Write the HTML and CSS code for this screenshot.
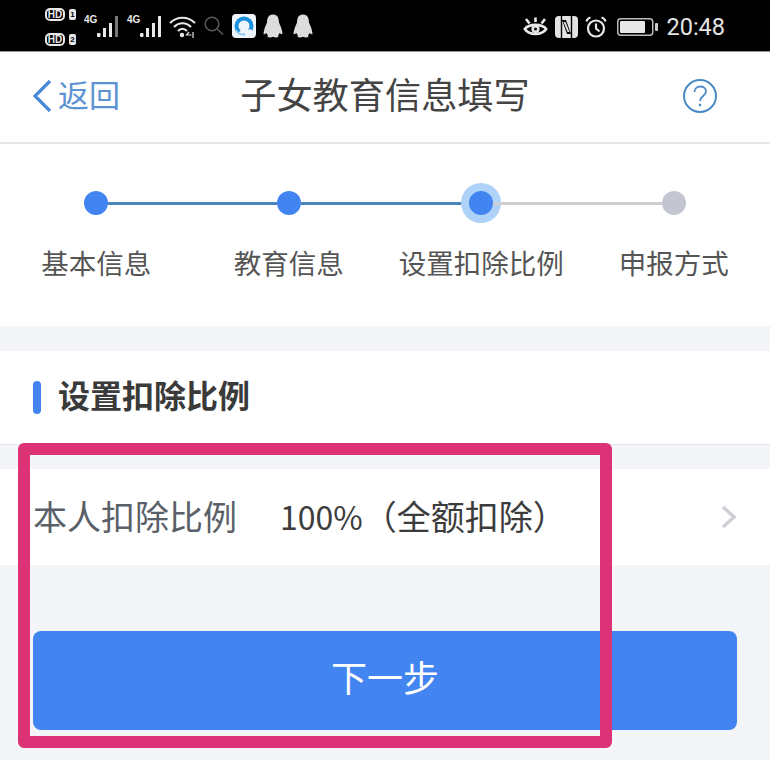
FILE: index.html
```html
<!DOCTYPE html>
<html lang="zh-CN">
  <head>
    <meta charset="UTF-8" />
    <meta name="viewport" content="width=device-width, initial-scale=1.0" />
    <title>子女教育信息填写</title>
    <link rel="stylesheet" href="styles.css">
  </head>
  <body>
    <div class="status-bar">
      <div class="status-left">
        <div class="hd-group">
          <div class="hd-line"><span class="hd">HD</span><span class="sim">1</span></div>
          <div class="hd-line"><span class="hd">HD</span><span class="sim">2</span></div>
        </div>
        <div class="net net-first">
          <span class="net-label">4G</span>
          <svg width="22" height="22" viewBox="0 0 22 22">
            <rect x="0" y="17" width="3.500" height="4" rx="1" fill="#e8e8e8" />
            <rect x="6" y="12" width="3" height="9" fill="#e8e8e8" />
            <rect x="12" y="7" width="3" height="14" fill="#e8e8e8" />
            <rect x="18" y="0" width="3" height="21" fill="#777" />
          </svg>
        </div>
        <div class="net net-second">
          <span class="net-label">4G</span>
          <svg width="22" height="22" viewBox="0 0 22 22">
            <rect x="0" y="17" width="3.500" height="4" rx="1" fill="#e8e8e8" />
            <rect x="6" y="12" width="3" height="9" fill="#e8e8e8" />
            <rect x="12" y="7" width="3" height="14" fill="#e8e8e8" />
            <rect x="18" y="0" width="3" height="21" fill="#e8e8e8" />
          </svg>
        </div>
        <svg class="wifi" width="27" height="22" viewBox="0 0 27 22" fill="none" stroke="#e8e8e8" stroke-width="2.2">
          <path d="M1 7 C8 0 19 0 26 7" />
          <path d="M5 11 C10 6 17 6 22 11" />
          <path d="M9 15 C12 12 15 12 18 15" />
          <circle cx="13" cy="19" r="2.2" fill="#e8e8e8" stroke="none" />
          <path d="M20 16 l-2.5 3 h5 M24 16 v6" stroke-width="1.2" />
        </svg>
        <svg class="search" width="20" height="19" viewBox="0 0 20 19" fill="none" stroke="#5a5a5a" stroke-width="1.5">
          <circle cx="8" cy="8" r="6.8" />
          <path d="M13 13 L19 18.5" />
        </svg>
        <svg class="app-icon" width="24" height="24" viewBox="0 0 24 24">
          <rect width="24" height="24" rx="4" fill="#eef5fa" />
          <circle cx="12" cy="12" r="7.500" fill="none" stroke="#1b8fdc" stroke-width="4" />
          <path d="M6 20 C9 14 14 13 16 16 C19 14 22 17 21 21 L8 22 Z" fill="#eef5fa" />
          <path d="M4 16 C6 20 10 21 13 20" fill="none" stroke="#8cc8ee" stroke-width="2" />
        </svg>
        <svg class="qq qq-first" width="20" height="24" viewBox="0 0 20 24">
          <path d="M10 0.500 C5 0.500 4.200 4.500 4 8.500 C3 11 0.800 15 0.500 20 C1.500 20.500 2.500 19.800 3.500 19 C4 20.500 4.500 21 5 21.500 C4 22.500 4.500 23.500 7 23.500 C8 23.500 9 23.300 10 22.800 C11 23.300 12 23.500 13 23.500 C15.500 23.500 16 22.500 15 21.500 C15.500 21 16 20.500 16.500 19 C17.500 19.800 18.500 20.500 19.500 20 C19.200 15 17 11 16 8.500 C15.800 4.500 15 0.500 10 0.500 Z" fill="#dcdcdc" />
        </svg>
        <svg class="qq qq-next" width="20" height="24" viewBox="0 0 20 24">
          <path d="M10 0.500 C5 0.500 4.200 4.500 4 8.500 C3 11 0.800 15 0.500 20 C1.500 20.500 2.500 19.800 3.500 19 C4 20.500 4.500 21 5 21.500 C4 22.500 4.500 23.500 7 23.500 C8 23.500 9 23.300 10 22.800 C11 23.300 12 23.500 13 23.500 C15.500 23.500 16 22.500 15 21.500 C15.500 21 16 20.500 16.500 19 C17.500 19.800 18.500 20.500 19.500 20 C19.200 15 17 11 16 8.500 C15.800 4.500 15 0.500 10 0.500 Z" fill="#dcdcdc" />
        </svg>
      </div>
      <div class="status-right">
        <svg width="25" height="20" viewBox="0 0 25 20" fill="none" stroke="#e8e8e8" stroke-width="2.600">
          <path d="M1.800 12 C6 6.500 19 6.500 23.200 12 C19 18.500 6 18.500 1.800 12 Z" />
          <circle cx="12.500" cy="12" r="2.800" />
          <path d="M3 2 L6.500 6.500 M22 2 L18.500 6.500 M12.500 0.500 V5" />
        </svg>
        <svg class="nfc" width="23" height="22" viewBox="0 0 23 22">
          <rect width="23" height="22" rx="4" fill="#e4e4e4" />
          <path d="M6.500 -1 V23 M16.500 -1 V23" stroke="#000" stroke-width="1.400" />
          <path d="M7 4 L11 4 L16 18 L12 18 Z" fill="#000" />
          <path d="M8.500 6 L10.500 6 L14.500 16 L12.500 16 Z" fill="#e4e4e4" />
        </svg>
        <svg class="alarm" width="22" height="22" viewBox="0 0 22 22" fill="none" stroke="#e8e8e8" stroke-width="2.200">
          <circle cx="11" cy="12.500" r="8" />
          <path d="M11 7.500 V12.500 L14.500 15.500 M1.500 5.500 C2 3.500 3.500 2 5.500 1.500 M20.500 5.500 C20 3.500 18.500 2 16.500 1.500" />
        </svg>
        <svg class="battery" width="42" height="18" viewBox="0 0 42 18">
          <rect x="0.750" y="0.750" width="35" height="16.500" rx="3" fill="none" stroke="#bbb" stroke-width="1.500" />
          <rect x="3" y="3" width="25" height="12" rx="1" fill="#e8e8e8" />
          <rect x="38" y="5" width="3" height="8" rx="1" fill="#ccc" />
        </svg>
        <span class="clock">20:48</span>
      </div>
    </div>

    <div class="nav">
      <div class="nav-back">
        <svg width="20" height="34" viewBox="0 0 20 34" fill="none" stroke="#4a8ad6" stroke-width="3.200">
          <path d="M18 2 L3 17 L18 32" />
        </svg>
        <span class="nav-back-text">返回</span>
      </div>
      <h1 class="nav-title">子女教育信息填写</h1>
      <svg class="nav-help" width="36" height="36" viewBox="0 0 36 36" fill="none" stroke="#4a8ac6" stroke-width="2">
        <circle cx="18" cy="18" r="16" />
        <path d="M12.500 14 C12.500 6.500 24 7 24 13.500 C24 18 18 18 18 23" stroke-width="1.800" />
        <circle cx="18" cy="27" r="1.300" fill="#4a8ac6" stroke="none" />
      </svg>
    </div>

    <div class="steps">
      <div class="step-track">
        <div class="dot"></div>
        <div class="link link-done"></div>
        <div class="dot"></div>
        <div class="link link-done"></div>
        <div class="dot dot-current"></div>
        <div class="link"></div>
        <div class="dot dot-todo"></div>
      </div>
      <div class="step-labels">
        <span>基本信息</span>
        <span>教育信息</span>
        <span>设置扣除比例</span>
        <span>申报方式</span>
      </div>
    </div>

    <div class="section-head">
      <div class="section-mark"></div>
      <h2>设置扣除比例</h2>
    </div>

    <div class="row">
      <span class="row-label">本人扣除比例</span>
      <span class="row-value">100%<span class="row-note">（全额扣除）</span></span>
      <svg class="row-arrow" width="16" height="24" viewBox="0 0 16 24" fill="none" stroke="#cfd0d6" stroke-width="3.500">
        <path d="M2 2 L13 12 L2 22" />
      </svg>
    </div>

    <button class="next-btn"><span class="next-text">下一步</span></button>

    <div class="highlight"></div>
  </body>
</html>
```

FILE: styles.css
```css
* {
  box-sizing: border-box;
}

body {
  margin: 0;
  height: 760px;
  overflow: hidden;
  position: relative;
  background: #f4f5f9;
  font-family: "Noto Sans CJK SC", "Noto Sans", sans-serif;
}

.status-bar {
  height: 52px;
  background: #000;
  border-bottom: 1px solid #999;
  padding: 0 45px;
  display: flex;
  align-items: center;
  justify-content: space-between;
  color: #e8e8e8;
}

.status-left,
.status-right {
  display: flex;
  align-items: center;
}

.status-right {
  padding-top: 3px;
}

.hd-group {
  display: flex;
  flex-direction: column;
  gap: 12px;
  margin-top: 3px;
}

.hd-line {
  display: flex;
  align-items: center;
  gap: 4px;
}

.hd {
  width: 20px;
  height: 13px;
  border: 2px solid #e8e8e8;
  border-radius: 5px;
  font: bold 10px/9px "Liberation Sans", sans-serif;
  text-align: center;
}

.sim {
  width: 7px;
  height: 11px;
  background: #e8e8e8;
  border-radius: 2px;
  color: #000;
  font: bold 8px/11px "Liberation Sans", sans-serif;
  text-align: center;
}

.net {
  display: flex;
  align-items: flex-start;
  margin-top: 2px;
}

.net-first {
  margin-left: 8px;
}

.net-second {
  margin-left: 8px;
}

.net-label {
  width: 13px;
  font: bold 10px/12px "Liberation Sans", sans-serif;
  margin-top: -2px;
}

.wifi {
  margin-left: 7px;
  margin-top: 2px;
}

.search {
  margin-left: 8px;
}

.app-icon {
  margin-left: 8px;
}

.qq-first {
  margin-left: 7px;
}

.qq-next {
  margin-left: 10px;
}

.status-right svg {
  margin-right: 7px;
}

.status-right .battery {
  margin-left: 3px;
}

.clock {
  font: 23.500px/30px Roboto, sans-serif;
  color: #e4e4e4;
}

.nav {
  height: 92px;
  background: #fff;
  border-bottom: 2px solid #e6e6e8;
  padding: 0 50px;
  display: grid;
  grid-template-columns: 1fr auto 1fr;
  align-items: center;
}

.nav-back {
  display: flex;
  align-items: center;
  gap: 6px;
  font-size: 31px;
  color: #5b93d3;
  margin: -2px 0 0 -18px;
}

.nav-back-text {
  margin-top: -6px;
}

.nav-title {
  margin: -8px 0 0;
  font-size: 36.200px;
  font-weight: 400;
  color: #444;
  line-height: 50px;
}

.nav-help {
  justify-self: end;
  margin: -2px 2px 0 0;
}

.steps {
  height: 182px;
  background: #fff;
  padding: 47px 0 0;
}

.step-track {
  height: 24px;
  padding: 0 84px;
  display: flex;
  align-items: center;
}

.dot {
  width: 24px;
  height: 24px;
  flex: none;
  border-radius: 50%;
  background: #4285f0;
}

.dot-current {
  box-shadow: 0 0 0 8px #afd2f8;
}

.dot-todo {
  background: #c3c6d0;
}

.link {
  flex: 1;
  height: 3px;
  background: #cfcfd3;
}

.link-done {
  background: #4a86bd;
}

.step-labels {
  margin-top: 27px;
  display: grid;
  grid-template-columns: repeat(4, 192.5px);
  justify-items: center;
  font-size: 27.500px;
  line-height: 40px;
  color: #555;
}

.section-head {
  height: 94px;
  margin-top: 25px;
  background: #fff;
  border-bottom: 1px solid #e4e5e9;
  padding-left: 33px;
  display: flex;
  align-items: center;
  gap: 18px;
}

.section-mark {
  width: 8px;
  height: 33px;
  border-radius: 4px;
  background: #4285f0;
}

.section-head h2 {
  margin: -8px 0 0 -1px;
  font-size: 32px;
  font-weight: 700;
  color: #3a3a3a;
  line-height: 44px;
}

.row {
  height: 96px;
  margin-top: 24px;
  background: #fff;
  padding: 0 33px;
  display: flex;
  align-items: center;
}

.row-label {
  width: 247px;
  font-size: 34px;
  color: #5a6068;
  margin-top: -4px;
}

.row-value {
  flex: 1;
  font-size: 32px;
  color: #3c3c3c;
  margin-top: -4px;
}

.row-note {
  font-size: 34px;
}

.next-btn {
  display: block;
  width: 704px;
  height: 99px;
  margin: 66px 0 0 33px;
  border: none;
  border-radius: 8px;
  background: #4285f0;
  color: #fff;
  font-family: inherit;
  font-size: 36px;
  cursor: pointer;
}

.next-text {
  display: block;
  margin-top: -10px;
}

/* red marker drawn over the screenshot */
.highlight {
  position: absolute;
  left: 18px;
  top: 443px;
  width: 594px;
  height: 305px;
  border: 12px solid #dc3376;
  border-radius: 6px;
  pointer-events: none;
}
```
